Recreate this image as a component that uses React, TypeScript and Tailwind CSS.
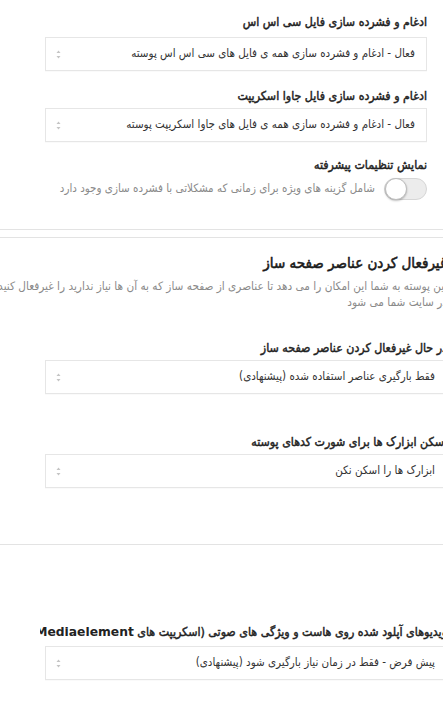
import React from "react";

const font = { fontFamily: '"DejaVu Sans", "Noto Sans", sans-serif' };

function Arrow() {
  return (
    <svg width="5" height="9" viewBox="0 0 5 9" className="shrink-0">
      <path d="M2.5 0.5 L4.5 3 L0.5 3 Z" fill="#c4c4c4" />
      <path d="M2.5 8.5 L4.5 6 L0.5 6 Z" fill="#c4c4c4" />
    </svg>
  );
}

function Select({ text }: { text: string }) {
  return (
    <div className="h-[34px] border border-[#e6e6e6] bg-white flex items-center justify-between pr-[11px] pl-[10px] shadow-[0_1px_1px_rgba(0,0,0,0.02)]">
      <span className="text-[11.5px] font-stretch-condensed text-[#333] whitespace-nowrap">{text}</span>
      <Arrow />
    </div>
  );
}

function Label({ children }: { children: React.ReactNode }) {
  return (
    <div className="text-[12.3px] font-stretch-condensed text-[#222] [-webkit-text-stroke:0.45px_#222] whitespace-nowrap leading-[20px]">
      {children}
    </div>
  );
}

export default function App() {
  return (
    <div dir="rtl" className="w-[443px] h-[713px] overflow-hidden bg-white relative" style={font}>
      {/* Section 1 */}
      <div className="pr-[16px] pl-[45px] pt-[12px] h-[230px] border-b border-[#e3e3e3]">
        <Label>ادغام و فشرده سازی فایل سی اس اس</Label>
        <div className="mt-[5px]">
          <Select text="فعال - ادغام و فشرده سازی همه ی فایل های سی اس اس پوسته" />
        </div>
        <div className="mt-[15px]">
          <Label>ادغام و فشرده سازی فایل جاوا اسکریپت</Label>
        </div>
        <div className="mt-[2px]">
          <Select text="فعال - ادغام و فشرده سازی همه ی فایل های جاوا اسکریپت پوسته" />
        </div>
        <div className="mt-[13px]">
          <Label>نمایش تنظیمات پیشرفته</Label>
        </div>
        <div className="flex items-center gap-[9px] mt-[3px]">
          <div className="w-[43px] h-[22px] rounded-full bg-[#ececec] border border-[#d6d6d6] relative shrink-0">
            <div className="absolute left-0 top-[-1px] w-[22px] h-[22px] rounded-full bg-white border border-[#bdbdbd] shadow-[0_1px_2px_rgba(0,0,0,0.25)]" />
          </div>
          <span className="text-[11.5px] font-stretch-condensed text-[#8a8a8a] whitespace-nowrap">
            شامل گزینه های ویژه برای زمانی که مشکلاتی با فشرده سازی وجود دارد
          </span>
        </div>
      </div>

      {/* Section 2 */}
      <div className="mt-[7px] border-t border-[#e3e3e3] h-[308px] border-b">
        <div className="mr-[-4px] pl-[45px] pt-[14px]">
          <div className="text-[15px] font-stretch-condensed text-[#1a1a1a] [-webkit-text-stroke:0.55px_#1a1a1a] whitespace-nowrap leading-[22px]">
            غیرفعال کردن عناصر صفحه ساز
          </div>
          <div className="mt-[4px] text-[11.7px] font-stretch-condensed text-[#8a8a8a] leading-[16px] ml-[-45px]">
            <div className="whitespace-nowrap">این پوسته به شما این امکان را می دهد تا عناصری از صفحه ساز که به آن ها نیاز ندارید را غیرفعال کنید</div>
            <div className="whitespace-nowrap">در سایت شما می شود</div>
          </div>
          <div className="mt-[28px]">
            <Label>در حال غیرفعال کردن عناصر صفحه ساز</Label>
          </div>
          <div className="mt-[2px]">
            <Select text="فقط بارگیری عناصر استفاده شده (پیشنهادی)" />
          </div>
          <div className="mt-[38px]">
            <Label>اسکن ابزارک ها برای شورت کدهای پوسته</Label>
          </div>
          <div className="mt-[2px]">
            <Select text="ابزارک ها را اسکن نکن" />
          </div>
        </div>
      </div>

      {/* Section 3 */}
      <div className="mr-[-4px] pl-[45px] pt-[77px]">
        <div className="ml-[-5px] overflow-hidden">
          <Label>
            ویدیوهای آپلود شده روی هاست و ویژگی های صوتی (اسکریپت های{" "}
            <span className="font-bold font-stretch-normal [-webkit-text-stroke:0px]">Mediaelement</span>)
          </Label>
        </div>
        <div className="mt-[4px]">
          <Select text="پیش فرض - فقط در زمان نیاز بارگیری شود (پیشنهادی)" />
        </div>
      </div>
    </div>
  );
}
